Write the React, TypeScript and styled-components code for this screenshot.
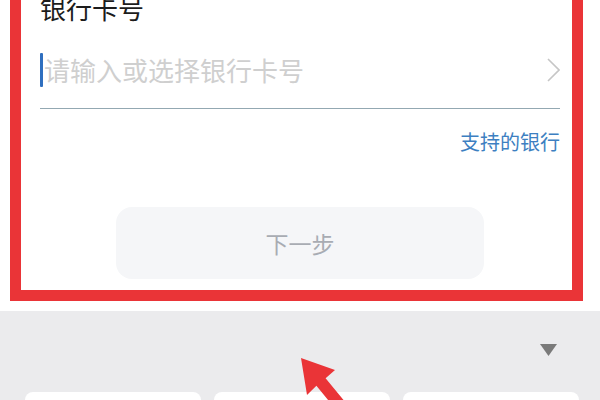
import React from 'react';
import styled, { createGlobalStyle } from 'styled-components';

const colors = {
  red: '#ea3437',
  title: '#1c1c1c',
  placeholder: '#cfcfcf',
  line: '#93a8b2',
  link: '#3d7fc1',
  buttonBg: '#f5f6f8',
  buttonText: '#a8acb3',
  keyboard: '#ebebed',
};

const GlobalStyle = createGlobalStyle`
  html, body {
    margin: 0;
    padding: 0;
    background: #ffffff;
  }
  body {
    font-family: "Noto Sans CJK SC", "Noto Sans", sans-serif;
  }
`;

const Page = styled.div`
  position: relative;
  width: 600px;
  height: 400px;
  overflow: hidden;
  background: #ffffff;
  display: flex;
  flex-direction: column;
`;

const Frame = styled.section`
  margin: -31px 17px 0 10px;
  border: 11px solid ${colors.red};
  padding: 13px 12px 11px 19px;
  display: flex;
  flex-direction: column;
`;

const Title = styled.h2`
  margin: 0;
  font-size: 26px;
  line-height: 30px;
  font-weight: 400;
  color: ${colors.title};
`;

const Field = styled.div`
  display: flex;
  align-items: center;
  height: 36px;
  padding: 29px 0 20px;
  border-bottom: 1.5px solid ${colors.line};
`;

const Cursor = styled.span`
  width: 3px;
  height: 34px;
  background: #2f6fbf;
  border-radius: 1px;
`;

const Placeholder = styled.span`
  flex: 1;
  margin-left: 1px;
  font-size: 26px;
  line-height: 36px;
  color: ${colors.placeholder};
`;

const Chevron = styled.svg`
  width: 13px;
  height: 24px;
`;

const LinkRow = styled.div`
  display: flex;
  justify-content: flex-end;
  margin-top: 21px;
`;

const BankLink = styled.a`
  font-size: 20px;
  line-height: 24px;
  color: ${colors.link};
  text-decoration: none;
`;

const NextButton = styled.button`
  align-self: center;
  margin-top: 53px;
  width: 368px;
  height: 72px;
  border: none;
  border-radius: 16px;
  background: ${colors.buttonBg};
  color: ${colors.buttonText};
  font-family: inherit;
  font-size: 23px;
`;

const Keyboard = styled.div`
  flex: 1;
  margin-top: 10px;
  background: ${colors.keyboard};
  display: flex;
  flex-direction: column;
`;

const KeyboardBar = styled.div`
  height: 81px;
  display: flex;
  justify-content: flex-end;
  align-items: flex-start;
  padding-right: 43px;
  box-sizing: border-box;
`;

const Collapse = styled.svg`
  margin-top: 33px;
  width: 17px;
  height: 12px;
`;

const KeyRow = styled.div`
  display: grid;
  grid-template-columns: repeat(3, 176px);
  column-gap: 13px;
  padding-left: 25px;
`;

const Key = styled.div`
  height: 40px;
  background: #ffffff;
  border-radius: 8px;
`;

const ArrowMark = styled.svg`
  position: absolute;
  left: 0;
  top: 0;
  width: 600px;
  height: 400px;
  pointer-events: none;
`;

const App: React.FC = () => (
  <>
    <GlobalStyle />
    <Page>
      <Frame>
        <Title>银行卡号</Title>
        <Field>
          <Cursor />
          <Placeholder>请输入或选择银行卡号</Placeholder>
          <Chevron viewBox="0 0 13 24">
            <path
              d="M1 1 L12 12 L1 23"
              fill="none"
              stroke="#c6c6c6"
              strokeWidth="1.6"
            />
          </Chevron>
        </Field>
        <LinkRow>
          <BankLink href="#">支持的银行</BankLink>
        </LinkRow>
        <NextButton>下一步</NextButton>
      </Frame>
      <Keyboard>
        <KeyboardBar>
          <Collapse viewBox="0 0 17 12">
            <path d="M0 0 H17 L8.5 12 Z" fill="#7a7a7a" />
          </Collapse>
        </KeyboardBar>
        <KeyRow>
          <Key />
          <Key />
          <Key />
        </KeyRow>
      </Keyboard>
      <ArrowMark viewBox="0 0 600 400">
        <polygon
          points="301,358 335,370 325.6,378.2 348.6,406.2 339.4,413.8 316.4,385.8 307,395"
          fill={colors.red}
        />
      </ArrowMark>
    </Page>
  </>
);

export default App;
